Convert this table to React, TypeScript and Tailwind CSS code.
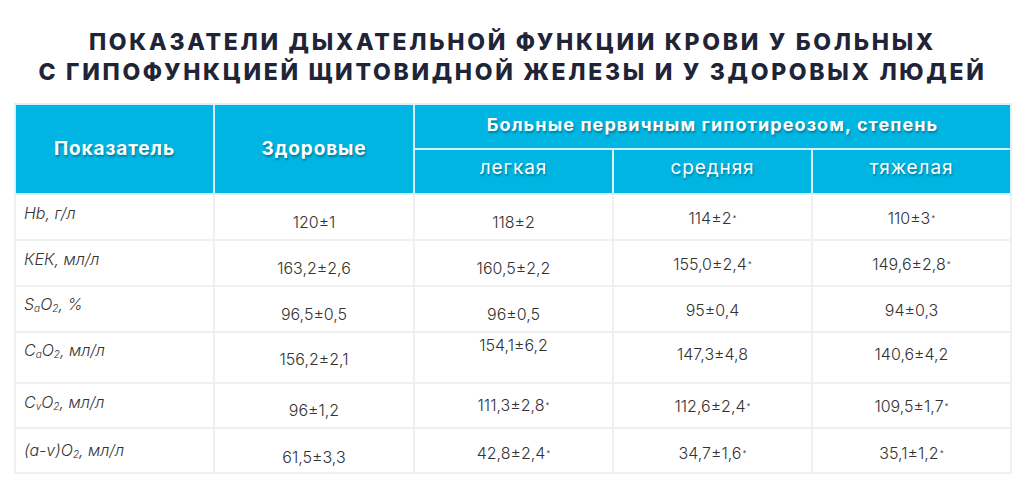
import React from 'react'

type Cell = { v: React.ReactNode; pt: number }
type Row = { h: number; label: Cell; cells: Cell[] }

const star = <sup className="text-[8px] relative -top-[3px] ml-[1px]">*</sup>

function Sub({ children }: { children: React.ReactNode }) {
  return <sub className="text-[10px] relative top-[2px]">{children}</sub>
}

const rows: Row[] = [
  {
    h: 46,
    label: { v: 'Hb, г/л', pt: 8 },
    cells: [
      { v: '120±1', pt: 17 },
      { v: '118±2', pt: 17 },
      { v: <>114±2{star}</>, pt: 13 },
      { v: <>110±3{star}</>, pt: 13 },
    ],
  },
  {
    h: 46,
    label: { v: 'КЕК, мл/л', pt: 8 },
    cells: [
      { v: '163,2±2,6', pt: 17 },
      { v: '160,5±2,2', pt: 17 },
      { v: <>155,0±2,4{star}</>, pt: 13 },
      { v: <>149,6±2,8{star}</>, pt: 13 },
    ],
  },
  {
    h: 46,
    label: {
      v: (
        <>
          S<Sub>a</Sub>O<Sub>2</Sub>, %
        </>
      ),
      pt: 7,
    },
    cells: [
      { v: '96,5±0,5', pt: 17 },
      { v: '96±0,5', pt: 17 },
      { v: '95±0,4', pt: 13 },
      { v: '94±0,3', pt: 13 },
    ],
  },
  {
    h: 51,
    label: {
      v: (
        <>
          C<Sub>a</Sub>O<Sub>2</Sub>, мл/л
        </>
      ),
      pt: 7,
    },
    cells: [
      { v: '156,2±2,1', pt: 16 },
      { v: '154,1±6,2', pt: 2 },
      { v: '147,3±4,8', pt: 11 },
      { v: '140,6±4,2', pt: 11 },
    ],
  },
  {
    h: 45,
    label: {
      v: (
        <>
          C<Sub>v</Sub>O<Sub>2</Sub>, мл/л
        </>
      ),
      pt: 8,
    },
    cells: [
      { v: '96±1,2', pt: 16 },
      { v: <>111,3±2,8{star}</>, pt: 11 },
      { v: <>112,6±2,4{star}</>, pt: 12 },
      { v: <>109,5±1,7{star}</>, pt: 12 },
    ],
  },
  {
    h: 45,
    label: {
      v: (
        <>
          (a-v)O<Sub>2</Sub>, мл/л
        </>
      ),
      pt: 11,
    },
    cells: [
      { v: '61,5±3,3', pt: 18 },
      { v: <>42,8±2,4{star}</>, pt: 14 },
      { v: <>34,7±1,6{star}</>, pt: 14 },
      { v: <>35,1±1,2{star}</>, pt: 14 },
    ],
  },
]

const headShadow = { textShadow: '1px 2px 2px rgba(0,0,0,0.3)' }

export default function App() {
  return (
    <div
      className="w-[1025px] h-[485px] bg-white overflow-hidden"
      style={{ fontFamily: 'Inter, "Open Sans", sans-serif' }}>
      <h1 className="pt-[27px] text-center text-[23px] leading-[30px] font-extrabold tracking-[2.7px] text-[#1f2437] uppercase">
        Показатели дыхательной функции крови у больных
        <br />с гипофункцией щитовидной железы и у здоровых людей
      </h1>
      <table className="mt-[16px] ml-[14px] w-[996px] table-fixed border-collapse">
        <colgroup>
          <col className="w-[199px]" />
          <col className="w-[200px]" />
          <col className="w-[199px]" />
          <col className="w-[199px]" />
          <col className="w-[199px]" />
        </colgroup>
        <thead>
          <tr className="h-[45px]">
            <th
              rowSpan={2}
              style={headShadow}
              className="bg-[#00b5e2] border-2 border-[#d9f1f8] text-white text-[19px] tracking-[0.9px] font-bold">
              Показатель
            </th>
            <th
              rowSpan={2}
              style={headShadow}
              className="bg-[#00b5e2] border-2 border-[#d9f1f8] text-white text-[19px] tracking-[0.9px] font-bold">
              Здоровые
            </th>
            <th
              colSpan={3}
              style={headShadow}
              className="bg-[#00b5e2] border-2 border-[#d9f1f8] text-white text-[18px] tracking-[1.1px] font-bold align-top pt-[6px]">
              Больные первичным гипотиреозом, степень
            </th>
          </tr>
          <tr className="h-[45px]">
            {['легкая', 'средняя', 'тяжелая'].map((t) => (
              <th
                key={t}
                style={headShadow}
                className="bg-[#00b5e2] border-2 border-[#d9f1f8] text-white text-[19px] tracking-[0.9px] font-normal align-top pt-[4px]">
                {t}
              </th>
            ))}
          </tr>
        </thead>
        <tbody>
          {rows.map((r, i) => (
            <tr key={i} style={{ height: r.h }}>
              <td
                className="border-2 border-[#f0f0f0] align-top pl-[8px] text-[16px] leading-[20px] italic font-light text-[#333]"
                style={{ paddingTop: r.label.pt }}>
                {r.label.v}
              </td>
              {r.cells.map((c, j) => (
                <td
                  key={j}
                  className="border-2 border-[#f0f0f0] align-top text-center text-[16px] leading-[20px] font-light text-[#333]"
                  style={{ paddingTop: c.pt }}>
                  {c.v}
                </td>
              ))}
            </tr>
          ))}
        </tbody>
      </table>
    </div>
  )
}
